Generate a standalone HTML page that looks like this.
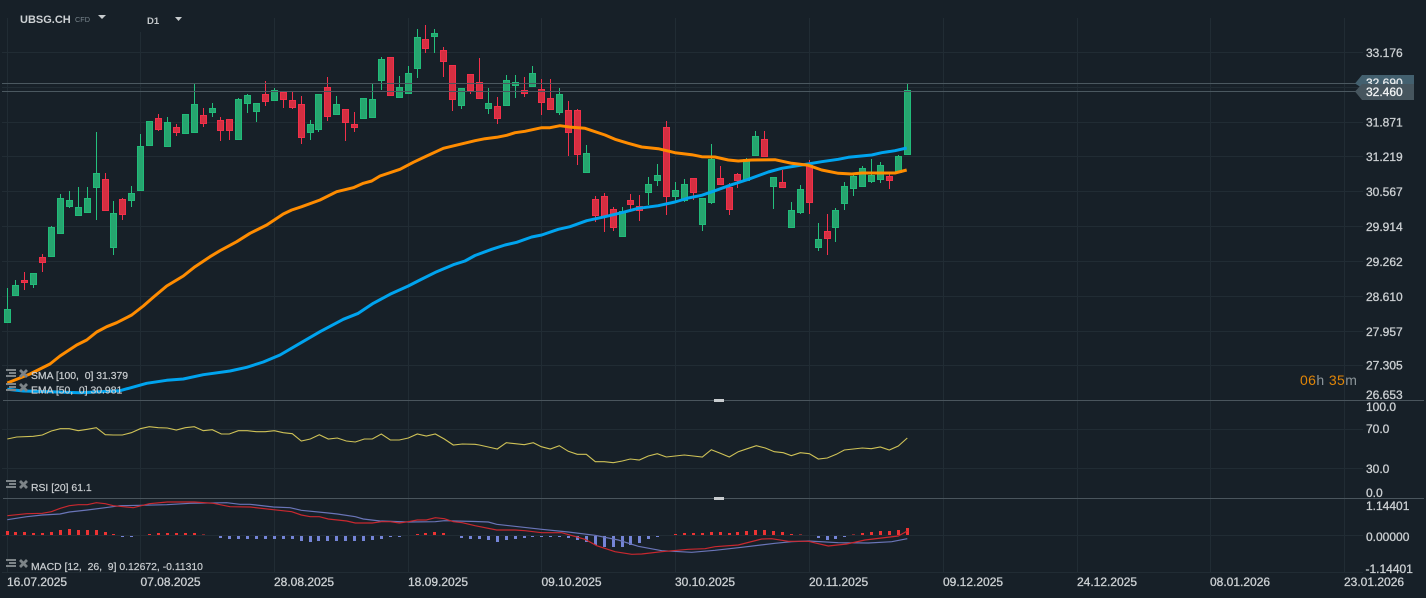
<!DOCTYPE html>
<html>
<head>
<meta charset="utf-8">
<title>UBSG.CH</title>
<style>
html,body{margin:0;padding:0;background:#172028;width:1426px;height:598px;overflow:hidden}
svg{display:block;position:absolute;left:0;top:0}
text{font-family:"Liberation Sans",sans-serif}
.a{font-size:12px;fill:#ccd0d3;stroke:#ccd0d3;stroke-width:.3}
.l{font-size:10.4px;fill:#c9cdd0;stroke:#c9cdd0;stroke-width:.2;white-space:pre}
.i{fill:#7d8488}
</style>
</head>
<body>
<svg width="1426" height="598" viewBox="0 0 1426 598" xmlns="http://www.w3.org/2000/svg">
<rect width="1426" height="598" fill="#172028"/>
<!-- grid -->
<path d="M2 52.5H1363M2 87.5H1363M2 122.5H1363M2 156.5H1363M2 191.5H1363M2 226.5H1363M2 261.5H1363M2 296.5H1363M2 331.5H1363M2 365.5H1363M2 429.5H1363M2 468.5H1363M2 535.5H1363M2 572.5H1363" stroke="#212c34" stroke-width="1" fill="none"/>
<path d="M7.5 18V573M140.5 32V573M274.5 18V573M408.5 18V573M541.5 18V573M675.5 18V573M809.5 18V573M943.5 18V573M1077.5 18V573M1210.5 18V573M1344.5 18V573" stroke="#212c34" stroke-width="1" fill="none"/>
<!-- wicks -->
<path fill="none" stroke="#24c07d" stroke-width="1" d="M7.5 288V322M15.5 280V295M33.5 273V288M51.5 226V256M60.5 194V233M69.5 191V208M78.5 187V215M87.5 187V212M96.5 132V220M113.5 201V255M131.5 186V207M140.5 134V190M149.5 121V145M167.5 117V146M185.5 114V133M194.5 84V132M212.5 103V117M238.5 98V139M247.5 94V113M256.5 103V122M274.5 88V101M310.5 120V140M318.5 94V132M336.5 96V114M363.5 98V119M372.5 84V117M381.5 57V90M399.5 76V97M408.5 66V93M417.5 29V78M434.5 29V53M461.5 88V109M488.5 88V114M506.5 75V105M515.5 75V98M532.5 66V86M559.5 88V115M586.5 145V173M622.5 207V236M648.5 177V205M657.5 164V186M675.5 182V201M684.5 179V202M702.5 198V231M711.5 144V204M746.5 158V180M755.5 131V156M773.5 177V209M791.5 202V227M800.5 185V214M818.5 223V251M835.5 208V242M844.5 182V210M853.5 173V196M862.5 166V186M871.5 159V183M880.5 162V183M898.5 155V172M907.5 84V154"/>
<path fill="none" stroke="#f2304a" stroke-width="1" d="M24.5 272V290M42.5 254V272M105.5 173V210M122.5 198V220M158.5 114V131M176.5 124V136M203.5 108V127M220.5 117V141M229.5 119V140M265.5 81V106M283.5 92V108M292.5 92V109M301.5 96V144M327.5 77V121M345.5 109V141M354.5 112V132M390.5 57V95M425.5 25V53M443.5 47V77M452.5 65V111M470.5 74V94M479.5 58V98M497.5 97V124M524.5 77V97M541.5 79V115M550.5 79V110M568.5 101V156M577.5 109V165M595.5 196V222M604.5 193V232M613.5 207V231M630.5 194V210M639.5 195V221M666.5 121V215M693.5 178V200M720.5 166V184M729.5 183V215M737.5 173V188M764.5 131V156M782.5 170V188M809.5 160V214M827.5 214V255M889.5 174V189"/>
<!-- green bodies -->
<path fill="#26a56f" stroke="#21bb79" stroke-width="1" d="M4.5 309.5h6V322.5h-6zM12.5 285.5h6V295.5h-6zM30.5 273.5h6V284.5h-6zM48.5 227.5h6V256.5h-6zM57.5 198.5h6V233.5h-6zM66.5 200.5h6V206.5h-6zM75.5 207.5h6V215.5h-6zM84.5 198.5h6V212.5h-6zM93.5 173.5h6V187.5h-6zM110.5 213.5h6V247.5h-6zM128.5 193.5h6V200.5h-6zM137.5 146.5h6V190.5h-6zM146.5 121.5h6V145.5h-6zM164.5 122.5h6V146.5h-6zM182.5 114.5h6V133.5h-6zM191.5 104.5h6V132.5h-6zM209.5 108.5h6V112.5h-6zM235.5 99.5h6V139.5h-6zM244.5 95.5h6V103.5h-6zM253.5 103.5h6V111.5h-6zM271.5 90.5h6V100.5h-6zM307.5 124.5h6V132.5h-6zM315.5 94.5h6V129.5h-6zM333.5 104.5h6V114.5h-6zM360.5 98.5h6V118.5h-6zM369.5 99.5h6V117.5h-6zM378.5 59.5h6V80.5h-6zM396.5 87.5h6V97.5h-6zM405.5 73.5h6V93.5h-6zM414.5 37.5h6V68.5h-6zM431.5 33.5h6V36.5h-6zM458.5 88.5h6V105.5h-6zM485.5 103.5h6V108.5h-6zM503.5 80.5h6V105.5h-6zM512.5 82.5h6V85.5h-6zM529.5 73.5h6V86.5h-6zM556.5 94.5h6V112.5h-6zM583.5 153.5h6V172.5h-6zM619.5 211.5h6V236.5h-6zM645.5 184.5h6V192.5h-6zM654.5 175.5h6V180.5h-6zM672.5 190.5h6V196.5h-6zM681.5 184.5h6V200.5h-6zM699.5 198.5h6V224.5h-6zM708.5 159.5h6V202.5h-6zM743.5 159.5h6V180.5h-6zM752.5 136.5h6V155.5h-6zM770.5 177.5h6V186.5h-6zM788.5 210.5h6V227.5h-6zM797.5 189.5h6V212.5h-6zM815.5 239.5h6V247.5h-6zM832.5 210.5h6V227.5h-6zM841.5 186.5h6V203.5h-6zM850.5 176.5h6V188.5h-6zM859.5 168.5h6V186.5h-6zM868.5 175.5h6V181.5h-6zM877.5 165.5h6V179.5h-6zM895.5 156.5h6V172.5h-6zM904.5 90.5h6V154.5h-6z"/>
<!-- red bodies -->
<path fill="#d52f41" stroke="#f2304a" stroke-width="1" d="M21.5 280.5h6V282.5h-6zM39.5 257.5h6V262.5h-6zM102.5 179.5h6V210.5h-6zM119.5 199.5h6V214.5h-6zM155.5 118.5h6V129.5h-6zM173.5 127.5h6V132.5h-6zM200.5 115.5h6V123.5h-6zM217.5 120.5h6V130.5h-6zM226.5 119.5h6V130.5h-6zM262.5 94.5h6V101.5h-6zM280.5 92.5h6V99.5h-6zM289.5 100.5h6V107.5h-6zM298.5 104.5h6V137.5h-6zM324.5 87.5h6V116.5h-6zM342.5 109.5h6V122.5h-6zM351.5 124.5h6V127.5h-6zM387.5 57.5h6V95.5h-6zM422.5 39.5h6V48.5h-6zM440.5 50.5h6V61.5h-6zM449.5 65.5h6V99.5h-6zM467.5 74.5h6V90.5h-6zM476.5 82.5h6V98.5h-6zM494.5 106.5h6V118.5h-6zM521.5 90.5h6V93.5h-6zM538.5 89.5h6V102.5h-6zM547.5 98.5h6V109.5h-6zM565.5 110.5h6V132.5h-6zM574.5 110.5h6V154.5h-6zM592.5 199.5h6V215.5h-6zM601.5 196.5h6V216.5h-6zM610.5 209.5h6V227.5h-6zM627.5 200.5h6V204.5h-6zM636.5 206.5h6V210.5h-6zM663.5 127.5h6V196.5h-6zM690.5 178.5h6V192.5h-6zM717.5 178.5h6V184.5h-6zM726.5 187.5h6V209.5h-6zM734.5 174.5h6V180.5h-6zM761.5 139.5h6V156.5h-6zM779.5 182.5h6V187.5h-6zM806.5 165.5h6V202.5h-6zM824.5 231.5h6V238.5h-6zM886.5 176.5h6V180.5h-6z"/>
<!-- price lines -->
<path d="M2 83.5H1356M2 91.5H1356" stroke="#4b5860" stroke-width="1" fill="none"/>
<!-- MAs -->
<polyline fill="none" stroke="#00a4ef" stroke-width="3" stroke-linejoin="round" points="7.3,389.3 23.3,391 50,391.7 80,392.7 120,390.7 146.7,383.3 166.7,380.3 183.3,379 203.3,374.7 213.3,373.3 230,371 246.7,367.3 263.3,362 280,355 300,343.3 320,331.7 343.3,319.3 358.3,313.3 373.3,303.3 390,294.3 408.3,286 420,280 436.7,271.7 453.3,264.7 465,261 475,255.5 491.7,249.3 505,245 516.7,242.3 531.7,237 541.7,235 558.3,229.3 570,226.7 586.7,220.7 605,216.7 621.7,212.7 638.3,208.3 658.3,205.7 675,202 688.3,198 701.7,195.3 715,190.7 731.7,184.7 748.3,179.3 768.3,172 781.7,168.3 801.7,165 821.7,161.7 838.3,159.3 848.3,157.3 871.7,155 881.7,152.7 895,150.7 906.7,148"/>
<polyline fill="none" stroke="#ff8c00" stroke-width="3" stroke-linejoin="round" points="7.3,383 30,374 50,364 60,356 76.7,345 86.7,340 96.7,332 106.7,326.7 116.7,322.7 131.7,315 143.3,306 153.3,297.3 166.7,286 183.3,276 195,266.7 210,256.7 220,250.7 236.7,241.7 250,233.3 266.7,225 283.3,214 291.7,210 301.7,206.7 320,200 336.7,191.7 353.3,187.7 363.3,183.3 371.7,181 380,176 400,169.3 413.3,162.3 426.7,156 443.3,148.3 466.7,142.7 475,140.7 485,138.7 496.7,137.3 506.7,135.3 515,132.7 525,131.3 541.7,127.7 550,127.7 560,125.7 571.7,127.3 585,128.3 605,135 615,139.3 628.3,143.3 641.7,147 658.3,148.7 675,152.7 691.7,154.7 701.7,156.7 715,157 728.3,160 738.3,161 751.7,160 775,159.7 791.7,163.3 808.3,165.3 821.7,170 838.3,173.3 851.7,174 861.7,173 895,173 906.7,170"/>
<!-- separators -->
<path d="M3 400.5H1424M3 498.5H1424" stroke="#4a555d" stroke-width="1" fill="none"/>
<rect x="714" y="399" width="10" height="3" fill="#c8cccf"/>
<rect x="714" y="497" width="10" height="3" fill="#c8cccf"/>
<!-- RSI -->
<polyline fill="none" stroke="#cfc257" stroke-width="1.1" points="7.3,439 16.7,437 33.3,436.3 42.3,435 51.3,431 60.3,428.7 69.3,428.7 78.3,430.7 87.3,429.3 96.3,427.7 105.3,434.7 113.3,435 122.3,435 131.3,432.7 140.3,428.7 149.3,426.7 158.3,427.7 167.3,428 176.3,430 185.3,427.7 194.3,426.7 203.3,430.7 212.3,429.7 221.3,434 229.3,434 238.3,430.7 247.3,430.7 256.3,431.7 265.3,431.7 274.3,430.7 283.3,432.7 292.3,433.7 301.3,441 310.3,439 319.3,434.7 328.3,439 337.3,438 346.3,441 355.3,442 364.3,439 372.3,439 381.3,434 390.3,440 399.3,440 408.3,438 417.3,434 426.3,436 435.3,434 444.3,439 453.3,445 462.3,444 475,444.3 479.3,445 488.3,447 497.3,449 506.3,442.7 515.3,443.7 524.3,444.7 533.3,442.7 541.3,446.7 550.3,449 559.3,445.7 568.3,451.3 577.3,454.3 586.3,454.3 595.3,461.7 604.3,461.7 613.3,462.7 622.3,461 630.3,459 639.3,460 648.3,456 657.3,453.7 666.3,457 675.3,456 684.3,455 693.3,456 702.3,457 711.3,449.7 720.3,453.3 729.3,457 738.3,451.7 747.3,448.7 756.3,445.7 765.3,448 774.3,451.7 783.3,452.7 791.3,455.7 800.3,452.7 809.3,453.7 818.3,459 827.3,458 836.3,454.3 844.3,450 853.3,449 862.3,448 871.3,448.7 880.3,447 889.3,450 898.3,446 907.3,438"/>
<!-- MACD histogram -->
<path fill="#ec3333" d="M6 531h3V535h-3zM14 532h3V535h-3zM23 532h3V535h-3zM32 533h3V535h-3zM41 533h3V535h-3zM50 532h3V535h-3zM59 530h3V535h-3zM68 529h3V535h-3zM77 530h3V535h-3zM86 530h3V535h-3zM95 530h3V535h-3zM104 532h3V535h-3zM112 534h3V535h-3zM148 534h3V535h-3zM157 533h3V535h-3zM166 533h3V535h-3zM175 533h3V535h-3zM184 533h3V535h-3zM193 533h3V535h-3zM202 534.5h3V535h-3zM416 534h3V535h-3zM424 533h3V535h-3zM433 532h3V535h-3zM442 533h3V535h-3zM674 534h3V535h-3zM683 533h3V535h-3zM692 533h3V535h-3zM701 533h3V535h-3zM710 532h3V535h-3zM719 532h3V535h-3zM728 533h3V535h-3zM736 532h3V535h-3zM745 531h3V535h-3zM754 530h3V535h-3zM763 530h3V535h-3zM772 531h3V535h-3zM781 532h3V535h-3zM790 534h3V535h-3zM799 534.5h3V535h-3zM852 534.5h3V535h-3zM861 533h3V535h-3zM870 532h3V535h-3zM879 531h3V535h-3zM888 531h3V535h-3zM897 530h3V535h-3zM906 528h3V535h-3z"/>
<path fill="#7484d6" d="M121 536h3V537h-3zM130 536h3V537h-3zM219 536h3V538h-3zM228 536h3V539h-3zM237 536h3V539h-3zM246 536h3V539h-3zM255 536h3V539h-3zM264 536h3V539h-3zM273 536h3V539h-3zM282 536h3V539h-3zM291 536h3V539h-3zM300 536h3V541h-3zM309 536h3V542h-3zM317 536h3V541h-3zM326 536h3V541h-3zM335 536h3V541h-3zM344 536h3V541h-3zM353 536h3V541h-3zM362 536h3V541h-3zM371 536h3V540h-3zM380 536h3V539h-3zM389 536h3V537h-3zM398 536h3V537h-3zM460 536h3V538h-3zM469 536h3V539h-3zM478 536h3V539h-3zM487 536h3V540h-3zM496 536h3V542h-3zM505 536h3V540h-3zM514 536h3V539h-3zM523 536h3V538h-3zM531 536h3V537h-3zM540 536h3V537h-3zM549 536h3V537h-3zM558 536h3V537h-3zM567 536h3V538h-3zM576 536h3V540h-3zM585 536h3V542h-3zM594 536h3V545h-3zM603 536h3V547h-3zM612 536h3V547h-3zM621 536h3V547h-3zM629 536h3V545h-3zM638 536h3V543h-3zM647 536h3V539h-3zM656 536h3V537h-3zM817 536h3V538h-3zM826 536h3V540h-3zM834 536h3V539h-3zM843 536h3V537h-3z"/>
<!-- MACD lines -->
<polyline fill="none" stroke="#6a75b8" stroke-width="1.2" points="7.3,519.7 26.7,516.7 42.3,515 60,514 69.3,512 87.3,510 105.3,507.7 120,505.7 140.3,505.3 166.7,504.7 190,503.3 226.7,502.7 240,504.3 250,504.3 273.3,507 290,507.7 301.3,510.3 328.3,513 337.3,514 355.3,516.7 363.3,519 380,521 408.3,522 435.3,521.7 444.3,520.7 475,521.5 488.3,522 496.7,524.3 541.7,529.3 568.3,532 595,535.3 618.3,540 638.3,546.3 661.7,550.7 691.7,552.3 715,550.3 741.7,547.3 775,543.3 791.7,541.7 808.3,541 838.3,542.7 868.3,543 891.7,541.7 907.3,538.7"/>
<polyline fill="none" stroke="#c9282f" stroke-width="1.2" points="7.3,515.7 26.7,513.7 42.3,513.3 51.3,511.7 60.3,508.3 69.3,505.7 78.3,504.7 87.3,504.7 96.3,502.7 105.3,503.7 113.3,505.7 133.3,507.7 149.3,503.7 167.3,502 194.3,502 213.3,503.3 230,506.7 250,507 273.3,509.7 291.7,511.7 301.3,515 310.3,516.7 319.3,516.7 328.3,519 346.7,521 355.3,523 372.3,523 381.3,521.7 390.3,521.7 399.3,523 408.3,521.7 417.3,520 426.3,520 435.3,517.7 444.3,518.7 453.3,521.7 462.3,522.7 475,525.7 496.7,530 515,530 525,530.7 541.7,532.7 561.7,532.7 585,539.3 596.7,545.7 615,551.7 631.7,554.3 641.7,554 661.7,551.7 688.3,549.3 705,548.7 715,546.7 738.3,545 761.7,539 771.7,538.7 788.3,541.3 808.3,541.3 828.3,546 846.7,544 865,540 898.3,536 907.3,531"/>
<!-- price flags -->
<polygon points="1355,83.5 1362,75 1414,75 1414,88 1362,88" fill="#43606f"/>
<text class="a" x="1366" y="87" style="fill:#e6e9eb;stroke:#e6e9eb">32.690</text>
<polygon points="1355,91.5 1362,84 1414,84 1414,100 1362,100" fill="#46555e"/>
<text class="a" x="1366" y="96" style="fill:#f2f4f5;stroke:#f2f4f5">32.460</text>
<!-- price axis -->
<text class="a" x="1366" y="57">33.176</text>
<text class="a" x="1366" y="126.5">31.871</text>
<text class="a" x="1366" y="161">31.219</text>
<text class="a" x="1366" y="196">30.567</text>
<text class="a" x="1366" y="231">29.914</text>
<text class="a" x="1366" y="266">29.262</text>
<text class="a" x="1366" y="301">28.610</text>
<text class="a" x="1366" y="336">27.957</text>
<text class="a" x="1366" y="369.5">27.305</text>
<text class="a" x="1366" y="399">26.653</text>
<text class="a" x="1366" y="411">100.0</text>
<text class="a" x="1366" y="433">70.0</text>
<text class="a" x="1366" y="473">30.0</text>
<text class="a" x="1366" y="497">0.0</text>
<text class="a" x="1366" y="510">1.14401</text>
<text class="a" x="1366" y="541">0.00000</text>
<text class="a" x="1365.5" y="573">-1.14401</text>
<!-- date axis -->
<text class="a" x="7" y="586">16.07.2025</text>
<text class="a" x="140.5" y="586">07.08.2025</text>
<text class="a" x="274" y="586">28.08.2025</text>
<text class="a" x="408" y="586">18.09.2025</text>
<text class="a" x="541.5" y="586">09.10.2025</text>
<text class="a" x="675" y="586">30.10.2025</text>
<text class="a" x="809" y="586">20.11.2025</text>
<text class="a" x="943" y="586">09.12.2025</text>
<text class="a" x="1077" y="586">24.12.2025</text>
<text class="a" x="1210" y="586">08.01.2026</text>
<text class="a" x="1344" y="586">23.01.2026</text>
<!-- timer -->
<text x="1300" y="385" font-size="14" letter-spacing=".4"><tspan fill="#e08508">06</tspan><tspan fill="#8b9499">h</tspan><tspan fill="#e08508"> 35</tspan><tspan fill="#8b9499">m</tspan></text>
<!-- legends -->
<g class="i">
<path d="M6 369h10v2h-10zM9 372h7v2h-7zM6 375h10v2h-10zM6 383h10v2h-10zM9 386h7v2h-7zM6 389h10v2h-10zM6 480h10v2h-10zM9 483h7v2h-7zM6 486h10v2h-10zM6 559h10v2h-10zM9 562h7v2h-7zM6 565h10v2h-10z"/>
</g>
<g fill="none" stroke="#7d8488" stroke-width="2.8">
<path d="M20 370l7 7M27 370l-7 7M20 384l7 7M27 384l-7 7M20 481l7 7M27 481l-7 7M20 560l7 7M27 560l-7 7"/>
</g>
<text class="l" x="31" y="379">SMA [100,  0] 31.379</text>
<text class="l" x="31" y="393.5">EMA [50,  0] 30.981</text>
<text class="l" x="31" y="491">RSI [20] 61.1</text>
<text class="l" x="31" y="570">MACD [12,  26,  9] 0.12672, -0.11310</text>
<!-- header -->
<text x="20" y="23" font-size="11" font-weight="bold" fill="#cdd1d4">UBSG.CH</text>
<text x="75" y="22" font-size="7.3" fill="#78848c">CFD</text>
<polygon points="98,15 106,15 102,19" fill="#c8ccce"/>
<text x="147" y="24" font-size="9.5" font-weight="bold" fill="#c3c7ca">D1</text>
<polygon points="175,17 182,17 178.5,21" fill="#c8ccce"/>
</svg>
</body>
</html>
